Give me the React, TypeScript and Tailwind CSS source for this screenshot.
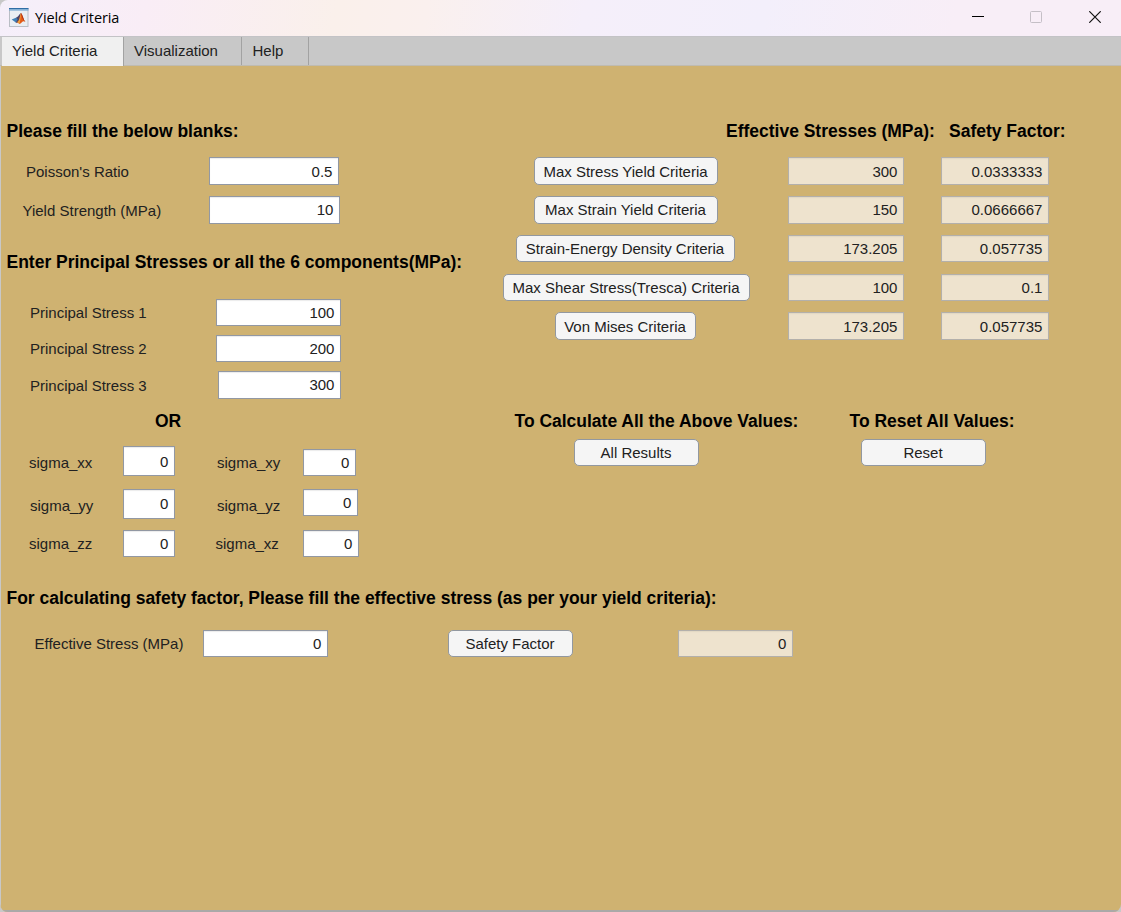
import type { ReactNode } from "react";

type BoxProps = { className: string; children: ReactNode };

function Heading({ className, children }: BoxProps) {
  return (
    <h2 className={`h-7 shrink-0 whitespace-nowrap text-[17.5px] font-bold leading-7 tracking-[-0.01px] text-black ${className}`}>
      {children}
    </h2>
  );
}

function Label({ className, children }: BoxProps) {
  return <label className={`shrink-0 self-center whitespace-nowrap ${className}`}>{children}</label>;
}

function Input({ className, children }: BoxProps) {
  return (
    <div
      className={`flex shrink-0 items-center justify-end border border-[#9298a3] bg-white pr-[5.6px] shadow-[inset_0_1px_1px_#ececec] ${className}`}
    >
      <span className="leading-[17px]">{children}</span>
    </div>
  );
}

function Output({ className, children }: BoxProps) {
  return (
    <div
      className={`flex shrink-0 items-center justify-end border border-[#b3b0ab] bg-[#eee3ce] pr-[5.6px] shadow-[inset_0_1px_1px_#e2d7c4] ${className}`}
    >
      <span className="leading-[17px]">{children}</span>
    </div>
  );
}

function Button({ className, children }: BoxProps) {
  return (
    <button
      className={`flex shrink-0 items-center justify-center whitespace-nowrap rounded-[5px] border border-[#9298a0] bg-[#f5f5f5] pr-px leading-[17px] ${className}`}
    >
      {children}
    </button>
  );
}

const criteria = [
  { name: "Max Stress Yield Criteria", row: "mt-3 h-7", button: "ml-[33px] w-[184px]", output: "ml-[70px]", factorBox: "", stress: "300", factor: "0.0333333" },
  { name: "Max Strain Yield Criteria", row: "mt-[11px] h-7", button: "ml-[33px] w-[184px] pb-[2px]", output: "ml-[70px] pb-[2px]", factorBox: "pb-[2px]", stress: "150", factor: "0.0666667" },
  { name: "Strain-Energy Density Criteria", row: "mt-[11px] h-[27px]", button: "ml-[15px] w-[219px]", output: "ml-[53px]", factorBox: "", stress: "173.205", factor: "0.057735" },
  { name: "Max Shear Stress(Tresca) Criteria", row: "mt-3 h-[27px]", button: "ml-[2px] w-[247px]", output: "ml-[38px]", factorBox: "", stress: "100", factor: "0.1" },
  { name: "Von Mises Criteria", row: "mt-[11px] h-7", button: "ml-[54px] w-[141px]", output: "ml-[92px]", factorBox: "", stress: "173.205", factor: "0.057735" },
];

function MatlabIcon() {
  return (
    <svg width="20" height="20" viewBox="0 0 20 20" className="shrink-0">
      <rect x="0.5" y="0.5" width="18.5" height="18" fill="#e9eef3" stroke="#b9bec5" />
      <rect x="0" y="0" width="19.5" height="1.2" fill="#2f6da5" />
      <rect x="0" y="1.2" width="19.5" height="1.4" fill="#78a9d2" />
      <path d="M2.7 11.6 7.4 9.6l2.2 1.8-2.8 3.2z" fill="#3f7fb5" />
      <path d="M7.2 9.6C9.3 9 10.2 6 12 5l-1 6.3-2.6 3.7-1.8-.5 2-3z" fill="#4a4568" />
      <path d="M12 5c1.3.5 2 5.6 4.4 9-1.5-1.1-2.5-.9-3.5.2-.9 1.1-1.8 1.7-2.7 1.9-.4-1.1-1-1.7-2.2-1.9C11.2 13 10.600 7.200 12 5z" fill="#e45b16" />
      <path d="M12 5c-.5 3-.2 7.400-1.800 11.100-.4-1.100-1-1.700-2.200-1.900C11.200 13 10.600 7.200 12 5z" fill="#f2a33b" />
      <path d="M12 5c1.300.5 2 5.600 4.400 9C14.200 12.500 12.900 9.500 12 5z" fill="#a92c12" />
    </svg>
  );
}

function TitleBar() {
  return (
    <header className="flex h-9 shrink-0 items-center bg-[linear-gradient(100deg,#f5effa_0%,#f9edf6_13%,#faf0eb_30%,#faf0ee_38%,#f5effa_52%,#f3effb_68%,#f8eef7_85%,#f8eef7_100%)] pl-[9px]">
      <div className="-mt-px">
        <MatlabIcon />
      </div>
      <span className="ml-[6px] w-[90px] whitespace-nowrap font-['Open_Sans',sans-serif] text-[14.5px] leading-5 tracking-[-0.12px] text-black">
        Yield Criteria
      </span>
      <div className="ml-auto flex items-center pb-[2px] pr-[20px]">
        <svg width="14" height="14" viewBox="0 0 14 14" className="mr-[45px]">
          <path d="M1 6.500h12" stroke="#000" strokeWidth="1" />
        </svg>
        <svg width="12" height="12" viewBox="0 0 12 12" className="mr-[47px]">
          <rect x="0.5" y="0.5" width="11" height="11" rx="1" fill="none" stroke="#c5bfc6" />
        </svg>
        <svg width="12" height="12" viewBox="0 0 12 12">
          <path d="M0.3 0.3 11.7 11.700M11.700 0.3 0.3 11.700" stroke="#111" strokeWidth="1.2" />
        </svg>
      </div>
    </header>
  );
}

function TabBar() {
  return (
    <nav className="flex h-[30px] shrink-0 border-t border-b border-t-[#c3c3c6] border-b-[#bfbbb0] bg-[#c8c8c8] pl-[2px] leading-7">
      <div className="-mb-px w-[122px] border-r border-[#a2a2a2] bg-[#f0f0f0] pl-[10px]">Yield Criteria</div>
      <div className="w-[118px] border-r border-[#a2a2a2] pl-[10px]">Visualization</div>
      <div className="w-[67px] border-r border-[#a2a2a2] pl-[10.500px]">Help</div>
    </nav>
  );
}

export default function App() {
  return (
    <div className="flex h-[912px] w-[1121px] flex-col overflow-hidden bg-[#c8c8c8] font-['Liberation_Sans',Arial,sans-serif] text-[15px] leading-[17px] text-[#212121]">
      <div className="flex min-h-0 flex-1 flex-col overflow-hidden rounded-tl-lg rounded-b-lg">
        <TitleBar />
        <TabBar />
        <main className="flex min-h-0 flex-1 flex-col border-l border-b-2 border-l-[#c8c8c8] border-b-[#aaa9a8] bg-[#cfb271] pt-[51px]">
          <div className="flex h-[467px] shrink-0">
            <section className="flex w-[500px] flex-col">
              <Heading className="pl-[5.5px]">Please fill the below blanks:</Heading>
              <div className="mt-3 flex h-7">
                <Label className="w-[208px] pl-[25px]">Poisson's Ratio</Label>
                <Input className="w-[130px]">0.5</Input>
              </div>
              <div className="mt-[11px] flex h-7">
                <Label className="w-[208px] pl-[21.5px]">Yield Strength (MPa)</Label>
                <Input className="w-[131px] pb-[2px]">10</Input>
              </div>
              <Heading className="mt-6 pl-[5.5px]">Enter Principal Stresses or all the 6 components(MPa):</Heading>
              <div className="mt-[23px] flex h-[27px]">
                <Label className="w-[215px] pl-[29px]">Principal Stress 1</Label>
                <Input className="w-[125px]">100</Input>
              </div>
              <div className="mt-[9px] flex h-[27px]">
                <Label className="w-[215px] pl-[29px]">Principal Stress 2</Label>
                <Input className="w-[125px]">200</Input>
              </div>
              <div className="mt-[9px] flex h-7">
                <Label className="w-[217px] pl-[29px]">Principal Stress 3</Label>
                <Input className="w-[123px] pb-[2px]">300</Input>
              </div>
              <Heading className="mt-2 pl-[154px]">OR</Heading>
              <div className="mt-[11px] flex h-[30px] items-end">
                <Label className="w-[122px] pl-[28px] pt-[2px]">sigma_xx</Label>
                <Input className="h-[30px] w-[52px]">0</Input>
                <Label className="w-[128px] pl-[42px] pt-[2px]">sigma_xy</Label>
                <Input className="h-[27px] w-[53px]">0</Input>
              </div>
              <div className="mt-[13px] flex h-[30px] items-start">
                <Label className="w-[122px] pl-[29px] pt-[2px]">sigma_yy</Label>
                <Input className="h-[30px] w-[52px] pb-[2px]">0</Input>
                <Label className="w-[128px] pl-[42px] pt-[2px]">sigma_yz</Label>
                <Input className="h-[27px] w-[55px]">0</Input>
              </div>
              <div className="mt-[11px] flex h-[27px]">
                <Label className="w-[122px] pl-[28px]">sigma_zz</Label>
                <Input className="w-[52px]">0</Input>
                <Label className="w-[128px] pl-[40.500px]">sigma_xz</Label>
                <Input className="w-[56px]">0</Input>
              </div>
            </section>
            <section className="flex flex-1 flex-col">
              <div className="flex">
                <Heading className="ml-[225px] w-[223px]">Effective Stresses (MPa):</Heading>
                <Heading className="">Safety Factor:</Heading>
              </div>
              {criteria.map((item) => (
                <div key={item.name} className={`flex ${item.row}`}>
                  <Button className={item.button}>{item.name}</Button>
                  <Output className={`w-[116px] ${item.output}`}>{item.stress}</Output>
                  <Output className={`ml-[37px] w-[108px] ${item.factorBox}`}>{item.factor}</Output>
                </div>
              ))}
              <div className="mt-[67px] flex">
                <div className="w-[335px]">
                  <Heading className="pl-[13.500px]">To Calculate All the Above Values:</Heading>
                  <Button className="ml-[73px] mt-1 h-[27px] w-[125px]">All Results</Button>
                </div>
                <div>
                  <Heading className="pl-[13.500px]">To Reset All Values:</Heading>
                  <Button className="ml-[25px] mt-1 h-[27px] w-[125px]">Reset</Button>
                </div>
              </div>
            </section>
          </div>
          <section>
            <Heading className="pl-[5.5px]">
              For calculating safety factor, Please fill the effective stress (as per your yield criteria):
            </Heading>
            <div className="mt-[18px] flex h-[27px]">
              <Label className="w-[202px] pl-[33.500px]">Effective Stress (MPa)</Label>
              <Input className="w-[125px]">0</Input>
              <Button className="ml-[120px] w-[125px]">Safety Factor</Button>
              <Output className="ml-[105px] w-[115px]">0</Output>
            </div>
          </section>
        </main>
      </div>
    </div>
  );
}
